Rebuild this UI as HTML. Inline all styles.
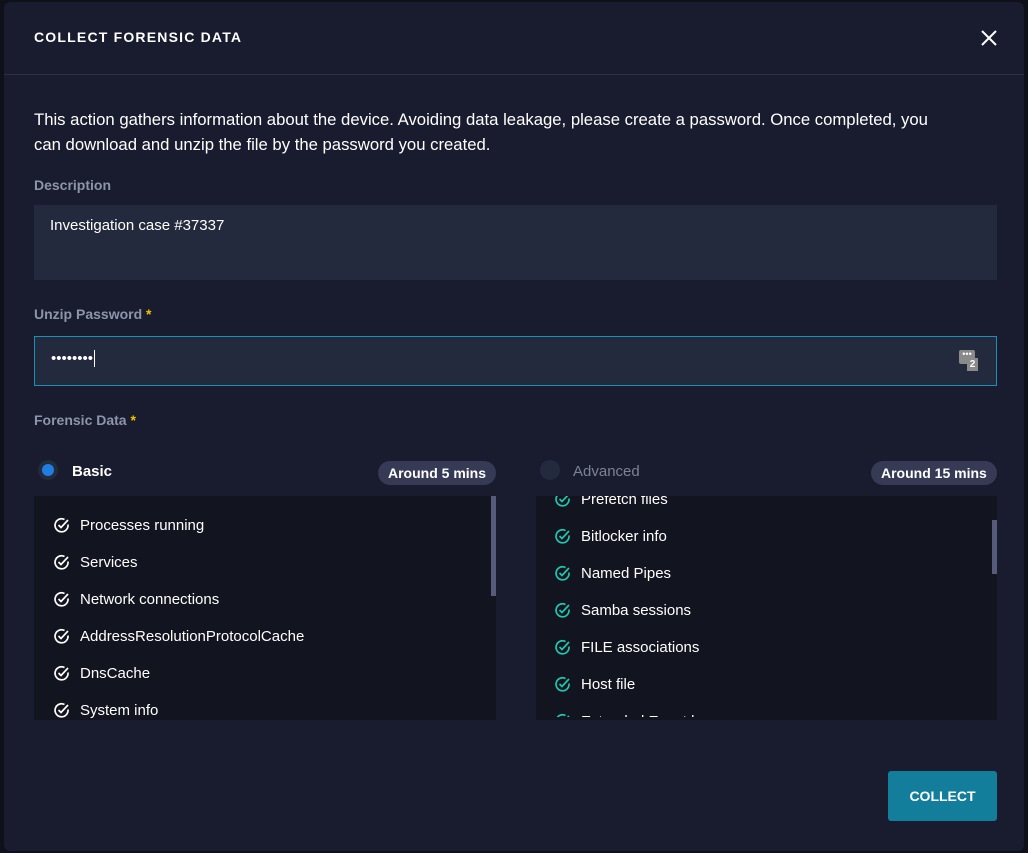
<html><head><style>
body{margin:0;width:1028px;height:853px;background:#0e101a;font-family:"Liberation Sans",Arial,sans-serif;overflow:hidden;position:relative}
.m{position:absolute;left:4px;top:2px;width:1020px;height:849px;background:#191b2f;border-radius:6px}
.a{position:absolute}
.t{left:30px;top:27px;color:#fff;font-weight:bold;font-size:14px;letter-spacing:1.2px}
.hr{left:0;top:72px;width:1020px;height:1px;background:#2c2f45}
.p{left:30px;top:105px;width:900px;color:#fff;font-size:16.7px;line-height:25px}
.l{color:#8f95a8;font-weight:bold;font-size:14px}
.l b{color:#f2c200}
.box{background:#232a3d}
.list{background:#12141f;overflow:hidden}
.it{position:absolute;left:19px;color:#fff;font-size:15px;display:flex;align-items:center;gap:10px}
.pill{background:#363a55;color:#fff;font-weight:bold;font-size:14px;border-radius:12px;height:24px;line-height:24px;padding:0 10px}
</style></head><body>
<div class="m">
<div class="a t">COLLECT FORENSIC DATA</div>
<svg class="a" style="left:976px;top:27px" width="18" height="18"><path d="M2 2L16 16M16 2L2 16" stroke="#fff" stroke-width="2"/></svg>
<div class="a hr"></div>
<div class="a p">This action gathers information about the device. Avoiding data leakage, please create a password. Once completed, you can download and unzip the file by the password you created.</div>
<div class="a l" style="left:30px;top:175px">Description</div>
<div class="a box" style="left:30px;top:203px;width:963px;height:75px"><div style="color:#fff;font-size:15px;margin:12px 16px">Investigation case #37337</div></div>
<div class="a l" style="left:30px;top:304px">Unzip Password <b>*</b></div>
<div class="a box" style="left:30px;top:334px;width:961px;height:48px;border:1px solid #1a8fb8"><div style="color:#fff;font-size:15px;margin:13px 16px">••••••••<span style="border-left:1px solid #fff;margin-left:1px"></span></div>
<div class="a" style="left:924px;top:13px;width:16px;height:14px;background:#8a8a8a;border-radius:2px;color:#fff;font-size:9px;line-height:8px;text-align:center">•••</div><div class="a" style="left:932px;top:21px;width:11px;height:13px;background:#8a8a8a;color:#fff;font-size:10px;font-weight:bold;text-align:center;line-height:13px">2</div></div>
<div class="a l" style="left:30px;top:410px">Forensic Data <b>*</b></div>
<div class="a" style="left:34px;top:458px;width:20px;height:20px;border-radius:50%;background:#232a3d"><div style="margin:4px;width:12px;height:12px;border-radius:50%;background:#1f7ee0"></div></div>
<div class="a" style="left:68px;top:461px;color:#fff;font-weight:bold;font-size:15px">Basic</div>
<div class="a pill" style="left:374px;top:459px">Around 5 mins</div>
<div class="a" style="left:536px;top:458px;width:20px;height:20px;border-radius:50%;background:#232a3d"></div>
<div class="a" style="left:569px;top:461px;color:#7b8294;font-size:15px">Advanced</div>
<div class="a pill" style="left:867px;top:459px">Around 15 mins</div>
<div class="a list" style="left:30px;top:494px;width:462px;height:224px">
<div class="a" style="right:0;top:0;width:5px;height:100px;background:#565b7a"></div>
</div>
<div class="a list" style="left:532px;top:494px;width:461px;height:224px">
<div class="a" style="right:0;top:24px;width:5px;height:54px;background:#565b7a"></div>
</div>
</div>
<div id="L"></div>
<div class="a" style="left:888px;top:771px;width:109px;height:50px;background:#127e9c;border-radius:3px;color:#fff;font-weight:bold;font-size:14px;text-align:center;line-height:50px">COLLECT</div>
<script>
function ck(c){return '<svg width="17" height="17" viewBox="0 0 17 17"><path d="M15 7.5A6.5 6.5 0 1 1 11.5 2.5" fill="none" stroke="'+c+'" stroke-width="1.7"/><path d="M5.5 8l2.5 2.5L15 3" fill="none" stroke="'+c+'" stroke-width="1.7"/></svg>';}
var h='';
["Processes running","Services","Network connections","AddressResolutionProtocolCache","DnsCache","System info"].forEach(function(s,i){h+='<div class="it a" style="left:53px;top:'+(517+i*37)+'px">'+ck('#fff')+s+'</div>';});
["Prefetch files","Bitlocker info","Named Pipes","Samba sessions","FILE associations","Host file","Extended Event logs"].forEach(function(s,i){var y=491+i*37;h+='<div class="it a" style="left:554px;top:'+y+'px;clip-path:inset('+Math.max(0,496-y)+'px 0 '+Math.max(0,y+20-720)+'px 0)">'+ck('#1fc8b0')+s+'</div>';});
document.getElementById('L').innerHTML=h;
</script>
</body></html>
